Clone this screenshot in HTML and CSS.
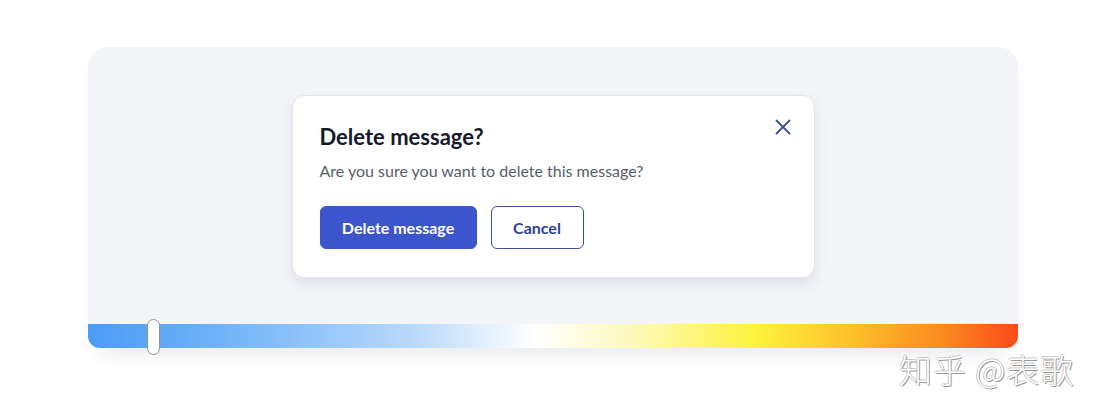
FILE: index.html
```html
<!DOCTYPE html>
<html>
<head>
<meta charset="utf-8">
<link rel="stylesheet" href="styles.css">
</head>
<body>
<div class="stage">
  <div class="card">
    <div class="dialog">
      <button class="close" aria-label="Close">
        <svg width="16" height="16" viewBox="0 0 16 16"><path d="M1.5 1.5 L14.5 14.5 M14.5 1.5 L1.5 14.5" stroke="#3a4f9c" stroke-width="1.8" stroke-linecap="round" fill="none"/></svg>
      </button>
      <h2 class="title">Delete message?</h2>
      <p class="text">Are you sure you want to delete this message?</p>
      <div class="actions">
        <button class="btn primary">Delete message</button>
        <button class="btn secondary">Cancel</button>
      </div>
    </div>
    <div class="bar">
      <div class="thumb"></div>
    </div>
  </div>
  <div class="watermark">知乎 @表歌</div>
</div>
</body>
</html>
```
FILE: styles.css
```css
* { box-sizing: border-box; }
html, body { margin: 0; padding: 0; background: #ffffff; }
body { font-family: Lato, "Noto Sans", sans-serif; }
.stage {
  position: relative;
  width: 1102px;
  height: 416px;
  padding: 47px 0 0 88px;
}
.card {
  position: relative;
  width: 930px;
  height: 301px;
  background: #f4f5f9;
  border-radius: 20px;
  display: flex;
  flex-direction: column;
  align-items: center;
  padding-top: 48px;
  box-shadow: 0 14px 22px -10px rgba(40, 50, 80, 0.12);
}
.dialog {
  position: relative;
  width: 523px;
  height: 183px;
  background: #ffffff;
  border: 1px solid #e3e5ea;
  border-radius: 12px;
  box-shadow: 0 6px 14px rgba(30, 40, 70, 0.10);
  padding: 26px 27px 0 27px;
}
.close {
  position: absolute;
  top: 23px;
  right: 23px;
  width: 16px;
  height: 16px;
  padding: 0;
  border: 0;
  background: none;
  display: flex;
}
.title {
  margin: 0;
  font-size: 22px;
  font-weight: 700;
  color: #151a2d;
  line-height: 30px;
}
.text {
  margin: 9px 0 0 0;
  font-size: 16px;
  color: #585d6a;
  line-height: 20px;
}
.actions {
  display: flex;
  gap: 14px;
  margin-top: 25px;
}
.btn {
  height: 43px;
  border-radius: 6px;
  font-family: Lato, "Noto Sans", sans-serif;
  font-size: 16px;
  font-weight: 700;
  padding: 0 21px;
}
.primary {
  width: 157px;
  background: #3d55cc;
  border: 1px solid #3d55cc;
  color: #ffffff;
}
.secondary {
  width: 93px;
  background: #ffffff;
  border: 1px solid #3b4f9a;
  color: #2f4593;
}
.bar {
  position: relative;
  margin-top: auto;
  width: 100%;
  height: 24px;
  border-radius: 0 0 12px 12px;
  background: linear-gradient(90deg, #4a9cf6 0%, #6fb2f8 14%, #b9d9fb 35%, #ffffff 48%, #fdfac0 58%, #fff23c 72%, #fdc12a 82%, #fb8a1f 92%, #fb4a19 100%);
}
.thumb {
  position: absolute;
  left: 59px;
  top: -5px;
  width: 13px;
  height: 36px;
  background: #ffffff;
  border: 1px solid #8e939c;
  border-radius: 7px;
}
.watermark {
  position: absolute;
  left: 899px;
  top: 345px;
  font-family: "Noto Sans CJK SC", sans-serif;
  font-weight: 300;
  font-size: 33px;
  color: #ffffff;
  letter-spacing: 1px;
  text-shadow: 1px 1px 0 #9a9a9a, -1px 0 0 #c8c8c8, 0 -1px 0 #c8c8c8;
}
```
